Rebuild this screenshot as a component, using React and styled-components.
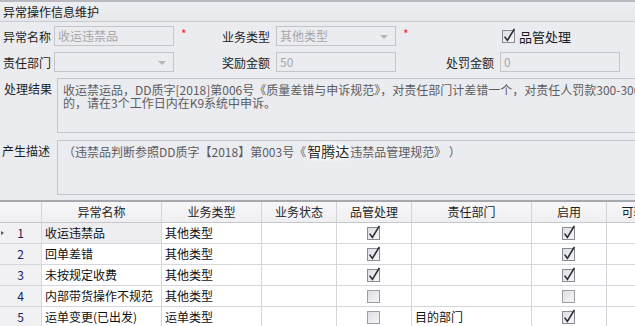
import React from "react";
import styled, { createGlobalStyle } from "styled-components";

const GlobalStyle = createGlobalStyle`
  html, body { margin: 0; padding: 0; }
  body {
    background: #ebecf0;
    font-family: "Noto Sans CJK SC", "Noto Sans", sans-serif;
    font-size: 12px;
    color: #1e1e1e;
    overflow: hidden;
  }
`;

const Page = styled.div`
  width: 635px;
  height: 326px;
  overflow: hidden;
  background: #ebecf0;
  border-top: 2px solid #b9babf;
  box-sizing: border-box;
`;

const TitleBar = styled.div`
  height: 20px;
  line-height: 19px;
  padding-left: 3px;
  background: linear-gradient(#eeeff2, #e6e7eb);
  border-bottom: 1px solid #c9cace;
  box-sizing: border-box;
  color: #1a1a1a;
`;

const Form = styled.div`
  display: flex;
  flex-direction: column;
  padding-top: 4px;
`;

const Row = styled.div`
  display: flex;
  align-items: center;
  height: 20px;
  margin-bottom: ${(p) => p.$gap || 0}px;
`;

const Label = styled.div`
  width: ${(p) => p.$w || 54}px;
  padding-left: ${(p) => p.$pl ?? 3}px;
  padding-right: ${(p) => p.$pr || 0}px;
  text-align: ${(p) => p.$align || "left"};
  box-sizing: border-box;
  flex: none;
  white-space: nowrap;
`;

const Input = styled.div`
  position: relative;
  width: 120px;
  height: 20px;
  box-sizing: border-box;
  border: 1px solid #c4c5ca;
  background: #ebecf0;
  color: #a6a6aa;
  line-height: 18px;
  padding-left: 3px;
  flex: none;
`;

const Arrow = styled.span`
  position: absolute;
  right: 7px;
  top: 8px;
  width: 0;
  height: 0;
  border-left: 4px solid transparent;
  border-right: 4px solid transparent;
  border-top: 4px solid #b5b6ba;
`;

const Star = styled.div`
  width: ${(p) => p.$w}px;
  flex: none;
  box-sizing: border-box;
  padding-left: 7px;
  color: #ff2020;
  font-size: 12px;
  line-height: 12px;
  padding-bottom: 4px;
`;

const CheckLabel = styled.div`
  display: flex;
  align-items: center;
  gap: 3px;
  font-size: 13px;
  color: #1a1a1a;
`;

const AreaRow = styled.div`
  display: flex;
  align-items: flex-start;
  margin-bottom: ${(p) => p.$gap || 0}px;
`;

const AreaLabel = styled.div`
  width: 57px;
  padding-left: ${(p) => p.$pl}px;
  padding-top: ${(p) => p.$pt}px;
  box-sizing: border-box;
  flex: none;
`;

const TextArea = styled.div`
  width: 640px;
  height: 55px;
  flex: none;
  box-sizing: border-box;
  border: 1px solid #c4c5ca;
  border-right: none;
  background: #ebecf0;
  color: #5c5c60;
  padding: ${(p) => p.$pt}px 0 0 5px;
  line-height: 12.5px;
  white-space: nowrap;
  overflow: hidden;
`;

const Mark = styled.span`
  font-size: 14px;
  color: #2a2a2a;
  text-shadow: 0 0 2px #fff, 0 0 4px #fff, 0 0 6px #fff, 0 0 8px #fff;
  background: radial-gradient(ellipse at center, rgba(255,255,255,0.9) 30%, rgba(255,255,255,0) 75%);
  margin: 0 1px 0 1px;
`;

const Grid = styled.div`
  margin-top: 5px;
  border-top: 2px solid #a7a8ae;
  background: #ffffff;
`;

const GridRow = styled.div`
  display: grid;
  grid-template-columns: 42px 120px 100px 75px 75px 120px 75px 54px;
  height: 21px;
`;

const HeadCell = styled.div`
  box-sizing: border-box;
  border-right: 1px solid #d3d4da;
  border-bottom: 1px solid #c6c7cd;
  background: linear-gradient(#f7f7f9, #efeff2);
  text-align: center;
  line-height: 20px;
  color: #1e1e1e;
  white-space: nowrap;
  overflow: hidden;
`;

const Cell = styled.div`
  position: relative;
  box-sizing: border-box;
  border-right: 1px solid #d6d7dc;
  border-bottom: 1px solid #d6d7dc;
  background: ${(p) => (p.$focus ? "#eeeef1" : p.$head ? "#f1f1f4" : "#ffffff")};
  line-height: 20px;
  padding-left: ${(p) => (p.$center ? 0 : 3)}px;
  text-align: ${(p) => (p.$center ? "center" : "left")};
  display: ${(p) => (p.$center ? "flex" : "block")};
  align-items: center;
  justify-content: center;
  color: ${(p) => (p.$head ? "#20205a" : "#111")};
  white-space: nowrap;
  overflow: hidden;
`;

const Pointer = styled.span`
  position: absolute;
  left: 1px;
  top: 8px;
  width: 0;
  height: 0;
  border-top: 2px solid transparent;
  border-bottom: 2px solid transparent;
  border-left: 3px solid #555;
`;

function CheckBox({ checked }) {
  return (
    <svg width="14" height="16" viewBox="0 0 14 16" style={{ display: "block" }}>
      <defs>
        <linearGradient id="cbg" x1="0" y1="0" x2="1" y2="1">
          <stop offset="0" stopColor="#dcdde2" />
          <stop offset="1" stopColor="#f7f7f9" />
        </linearGradient>
      </defs>
      <rect x="0.5" y="2.5" width="12" height="12" fill="url(#cbg)" stroke={checked ? "#8a8b92" : "#9d9ea5"} />
      {checked && (
        <path d="M2.6 8.6 L5.4 12.4 L12.4 0.8" fill="none" stroke="#2b2b36" strokeWidth="1.6" strokeLinejoin="miter" />
      )}
    </svg>
  );
}

const rows = [
  { n: 1, name: "收运违禁品", type: "其他类型", qc: true, dept: "", on: true },
  { n: 2, name: "回单差错", type: "其他类型", qc: true, dept: "", on: true },
  { n: 3, name: "未按规定收费", type: "其他类型", qc: true, dept: "", on: true },
  { n: 4, name: "内部带货操作不规范", type: "其他类型", qc: false, dept: "", on: false },
  { n: 5, name: "运单变更(已出发)", type: "运单类型", qc: false, dept: "目的部门", on: true },
];

const headers = ["", "异常名称", "业务类型", "业务状态", "品管处理", "责任部门", "启用", "可转"];

export default function App() {
  return (
    <>
      <GlobalStyle />
      <Page>
        <TitleBar>异常操作信息维护</TitleBar>
        <Form>
          <Row $gap={6}>
            <Label>异常名称</Label>
            <Input>收运违禁品</Input>
            <Star $w={48}>*</Star>
            <Label $pl={0}>业务类型</Label>
            <Input>
              其他类型
              <Arrow />
            </Input>
            <Star $w={106}>*</Star>
            <CheckLabel>
              <CheckBox checked />
              品管处理
            </CheckLabel>
          </Row>
          <Row $gap={6}>
            <Label>责任部门</Label>
            <Input>
              <Arrow />
            </Input>
            <Star $w={48} />
            <Label $pl={0}>奖励金额</Label>
            <Input>50</Input>
            <Label $w={104} $pl={0} $pr={6} $align="right">
              处罚金额
            </Label>
            <Input>0</Input>
          </Row>
          <AreaRow $gap={7}>
            <AreaLabel $pl={4} $pt={2}>处理结果</AreaLabel>
            <TextArea $pt={5}>
              收运禁运品，DD质字[2018]第006号《质量差错与申诉规范》，对责任部门计差错一个，对责任人罚款300-3000元
              <br />
              的，请在3个工作日内在K9系统中申诉。
            </TextArea>
          </AreaRow>
          <AreaRow>
            <AreaLabel $pl={2} $pt={2}>产生描述</AreaLabel>
            <TextArea $pt={4}>
              （违禁品判断参照DD质字【2018】第003号《<Mark>智腾达</Mark>违禁品管理规范》 ）
            </TextArea>
          </AreaRow>
        </Form>
        <Grid>
          <GridRow>
            {headers.map((h, i) => (
              <HeadCell key={i}>{h}</HeadCell>
            ))}
          </GridRow>
          {rows.map((r) => (
            <GridRow key={r.n}>
              <Cell $head $center>
                {r.n === 1 && <Pointer />}
                {r.n}
              </Cell>
              <Cell $focus={r.n === 1}>{r.name}</Cell>
              <Cell>{r.type}</Cell>
              <Cell />
              <Cell $center>
                <CheckBox checked={r.qc} />
              </Cell>
              <Cell>{r.dept}</Cell>
              <Cell $center>
                <CheckBox checked={r.on} />
              </Cell>
              <Cell />
            </GridRow>
          ))}
        </Grid>
      </Page>
    </>
  );
}
